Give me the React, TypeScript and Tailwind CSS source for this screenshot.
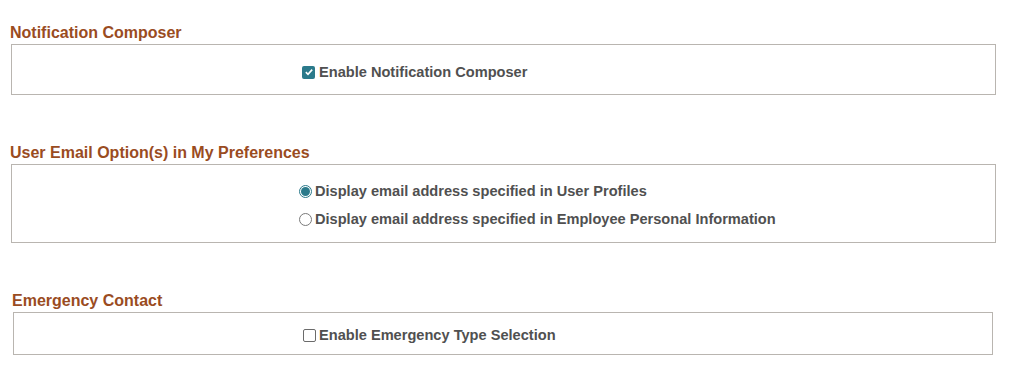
import React from "react";

const font = { fontFamily: '"Liberation Sans", Arial, sans-serif' };

function CheckedBox() {
  return (
    <span className="inline-flex h-[13px] w-[13px] items-center justify-center rounded-[2px] bg-[#2b7a8b]">
      <svg viewBox="0 0 12 12" className="h-[10px] w-[10px]">
        <path d="M2.2 6.2 L4.8 8.7 L9.8 3.2" fill="none" stroke="#fff" strokeWidth="2" />
      </svg>
    </span>
  );
}

function EmptyBox() {
  return <span className="inline-block h-[13px] w-[13px] rounded-[2px] border border-[#6b6b6b] bg-white" />;
}

function RadioOn() {
  return (
    <span className="inline-flex h-[13px] w-[13px] items-center justify-center rounded-full border border-[#2b7a8b] bg-white">
      <span className="h-[9px] w-[9px] rounded-full bg-[#2b7a8b]" />
    </span>
  );
}

function RadioOff() {
  return <span className="inline-block h-[13px] w-[13px] rounded-full border border-[#7a7a7a] bg-white" />;
}

export default function App() {
  return (
    <div className="min-h-[370px] w-[1028px] bg-white text-[#505050]" style={font}>
      <div className="pt-[22px]">
        <div className="ml-[10px] h-[20px] text-[16px] font-bold leading-[22px] text-[#9a4c1f]">
          Notification Composer
        </div>
        <div className="ml-[11px] mt-[2px] h-[51px] w-[985px] border border-[#b9b5b0] pl-[290px] pt-[17px]">
          <div className="flex h-[20px] items-center gap-[4px] text-[14.6px] font-bold">
            <CheckedBox />
            <span className="pt-[2px]">Enable Notification Composer</span>
          </div>
        </div>
      </div>

      <div className="pt-[47px]">
        <div className="ml-[10px] h-[20px] text-[16px] font-bold leading-[22px] text-[#9a4c1f]">
          User Email Option(s) in My Preferences
        </div>
        <div className="ml-[11px] mt-[2px] h-[79px] w-[985px] border border-[#b9b5b0] pl-[287px] pt-[16px]">
          <div className="flex flex-col gap-[8px] text-[14.6px] font-bold">
            <div className="flex h-[20px] items-center gap-[3px]">
              <RadioOn />
              <span className="pt-[2px]">Display email address specified in User Profiles</span>
            </div>
            <div className="flex h-[20px] items-center gap-[3px]">
              <RadioOff />
              <span className="pt-[2px]">Display email address specified in Employee Personal Information</span>
            </div>
          </div>
        </div>
      </div>

      <div className="pt-[47px]">
        <div className="ml-[12px] h-[20px] text-[16px] font-bold leading-[22px] text-[#9a4c1f]">
          Emergency Contact
        </div>
        <div className="ml-[13px] mt-[2px] h-[43px] w-[980px] border border-[#b9b5b0] pl-[289px] pt-[12px]">
          <div className="flex h-[20px] items-center gap-[3px] text-[14.6px] font-bold">
            <EmptyBox />
            <span className="pt-[2px]">Enable Emergency Type Selection</span>
          </div>
        </div>
      </div>
    </div>
  );
}
